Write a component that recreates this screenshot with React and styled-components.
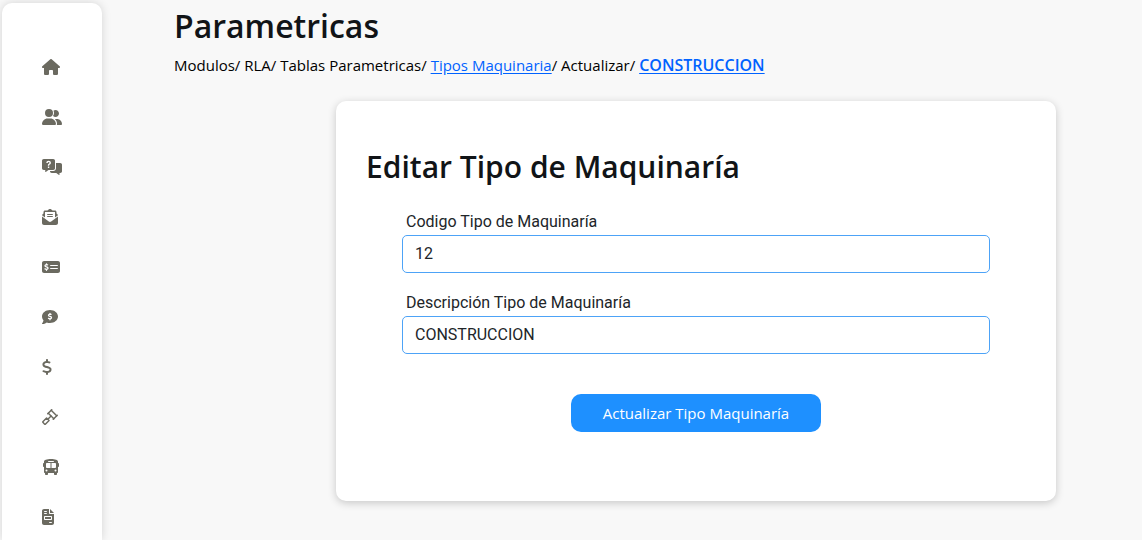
import React, { useState } from 'react'
import styled, { createGlobalStyle } from 'styled-components'
import {
  FaHouse,
  FaUserGroup,
  FaEnvelopeOpenText,
  FaMoneyCheckDollar,
  FaCommentDollar,
  FaDollarSign,
  FaBus,
  FaFileInvoice,
} from 'react-icons/fa6'

const GlobalStyle = createGlobalStyle`
  * {
    box-sizing: border-box;
  }
  body {
    margin: 0;
    background-color: #f8f8f8;
    color: #212529;
    font-family: 'Segoe UI', 'Open Sans', 'Noto Sans', sans-serif;
    font-size: 15px;
  }
`;

const Layout = styled.div`
  display: flex;
  height: 100vh;
  overflow: hidden;
`;

const Sidebar = styled.nav`
  flex: 0 0 100px;
  margin: 3px 0 0 2px;
  padding: 39px 40px 0;
  background-color: #fff;
  border-radius: 10px 10px 0 0;
  box-shadow: 0 0 10px rgba(0, 0, 0, 0.15);
`;

const Menu = styled.ul`
  margin: 0;
  padding: 0;
  list-style: none;
`;

const MenuLink = styled.a`
  display: flex;
  align-items: center;
  height: 50px;
  color: #6b6a60;
  >svg{
    flex: none;
    width: ${({ $width }) => $width}px;
    height: 16px;
  }
`;

const Main = styled.main`
  flex: 1;
  min-width: 0;
`;

const Header = styled.header`
  padding: 7px 0 0 72px;
`;

const Title = styled.h2`
  margin: 0;
  color: #111417;
  font-size: ${({ $size }) => $size}px;
  font-weight: 600;
  line-height: 38px;
`;

const Breadcrumb = styled.p`
  margin: 7px 0 0;
  color: #000;
  line-height: 26px;
  >a{
    color: #0062ff;
    text-underline-offset: 2px;
  }
  >a:last-child{
    font-size: 16px;
    font-weight: 600;
  }
`;

const CardArea = styled.section`
  display: flex;
  justify-content: center;
  padding: 23px 0 40px 148px;
`;

const Card = styled.div`
  width: 100%;
  max-width: 720px;
  min-height: 400px;
  padding: 47px 30px 69px;
  background-color: #fff;
  border-radius: 10px;
  box-shadow: 0 2px 8px rgba(0, 0, 0, 0.2);
`;

const Form = styled.form`
  display: flex;
  flex-direction: column;
  padding: 23px 36px 0;
  font-family: Roboto, sans-serif;
`;

const Field = styled.div`
  display: flex;
  flex-direction: column;
  margin-bottom: 17px;
`;

const Label = styled.label`
  padding-left: 4px;
  color: #212529;
  font-size: 16px;
  line-height: 26px;
`;

const Input = styled.input`
  width: 100%;
  height: 38px;
  padding: 0 12px 2px;
  border: 1px solid #4da3f7;
  border-radius: 5px;
  background-color: #fff;
  color: #212529;
  font-family: inherit;
  font-size: 16px;
`;

const SubmitButton = styled.button`
  align-self: center;
  width: 250px;
  height: 38px;
  margin-top: 23px;
  border: none;
  border-radius: 10px;
  background-color: #1e90ff;
  color: #fff;
  font-family: 'Segoe UI', 'Open Sans', 'Noto Sans', sans-serif;
  font-size: 15px;
  cursor: pointer;
`;

const QuestionIcon = () => (
  <svg viewBox="0 0 640 512" fill="currentColor" aria-hidden="true">
    <path
      fillRule="evenodd"
      d="M56 0h304c31 0 56 25 56 56v240c0 31-25 56-56 56H208l-88 62c-8 5-16 1-16-8v-54H56c-31 0-56-25-56-56V56C0 25 25 0 56 0zM138 124h44c3-17 14-26 30-26 17 0 29 9 29 22 0 13-8 20-24 29-20 11-29 23-29 45v18h43v-11c0-9 6-14 20-22 22-13 34-31 34-60 0-39-30-66-74-66-42 0-70 27-73 71zM188 242h44v44h-44z"
    />
    <path d="M448 128h136c31 0 56 25 56 56v208c0 31-25 56-56 56h-24v54c0 9-8 13-16 8l-88-62H312c-31 0-56-25-56-56v-8h104c49 0 88-39 88-88z" />
  </svg>
)

const GavelIcon = () => (
  <svg viewBox="0 0 512 512" fill="none" stroke="currentColor" strokeWidth="46" strokeLinejoin="round" strokeLinecap="round" aria-hidden="true">
    <path d="M312 24L184 152M488 200L360 328" />
    <path d="M294 42l176 176M202 134l176 176" />
    <path d="M290 222l-80 80" />
    <path d="M146 286l80 80-112 112c-12 12-24 12-36 0l-44-44c-12-12-12-24 0-36z" />
  </svg>
)

const menu = [
  { name: 'Inicio', icon: FaHouse, width: 18 },
  { name: 'Usuarios', icon: FaUserGroup, width: 20 },
  { name: 'Consultas', icon: QuestionIcon, width: 20 },
  { name: 'Correspondencia', icon: FaEnvelopeOpenText, width: 16 },
  { name: 'Pagos', icon: FaMoneyCheckDollar, width: 18 },
  { name: 'Cobros', icon: FaCommentDollar, width: 16 },
  { name: 'Tarifas', icon: FaDollarSign, width: 10 },
  { name: 'Remates', icon: GavelIcon, width: 16 },
  { name: 'Transporte', icon: FaBus, width: 18 },
  { name: 'Facturas', icon: FaFileInvoice, width: 12 },
]

function App() {
  const [tipo, setTipo] = useState({ codigo: '12', descripcion: 'CONSTRUCCION' })

  const handleChange = (e) => {
    setTipo({ ...tipo, [e.target.name]: e.target.value })
  }

  return (
    <>
      <GlobalStyle />
      <Layout>
        <Sidebar>
          <Menu>
            {menu.map(({ name, icon: Icon, width }) => (
              <li key={name}>
                <MenuLink href="#" aria-label={name} $width={width}>
                  <Icon />
                </MenuLink>
              </li>
            ))}
          </Menu>
        </Sidebar>
        <Main>
          <Header>
            <Title as="h1" $size={32}>Parametricas</Title>
            <Breadcrumb>
              Modulos/ RLA/ Tablas Parametricas/ <a href="#">Tipos Maquinaria</a>/ Actualizar/{' '}
              <a href="#">CONSTRUCCION</a>
            </Breadcrumb>
          </Header>
          <CardArea>
            <Card>
              <Title $size={30}>Editar Tipo de Maquinaría</Title>
              <Form onSubmit={(e) => e.preventDefault()}>
                <Field>
                  <Label htmlFor="codigo">Codigo Tipo de Maquinaría</Label>
                  <Input id="codigo" name="codigo" value={tipo.codigo} onChange={handleChange} />
                </Field>
                <Field>
                  <Label htmlFor="descripcion">Descripción Tipo de Maquinaría</Label>
                  <Input id="descripcion" name="descripcion" value={tipo.descripcion} onChange={handleChange} />
                </Field>
                <SubmitButton type="submit">Actualizar Tipo Maquinaría</SubmitButton>
              </Form>
            </Card>
          </CardArea>
        </Main>
      </Layout>
    </>
  )
}

export default App
